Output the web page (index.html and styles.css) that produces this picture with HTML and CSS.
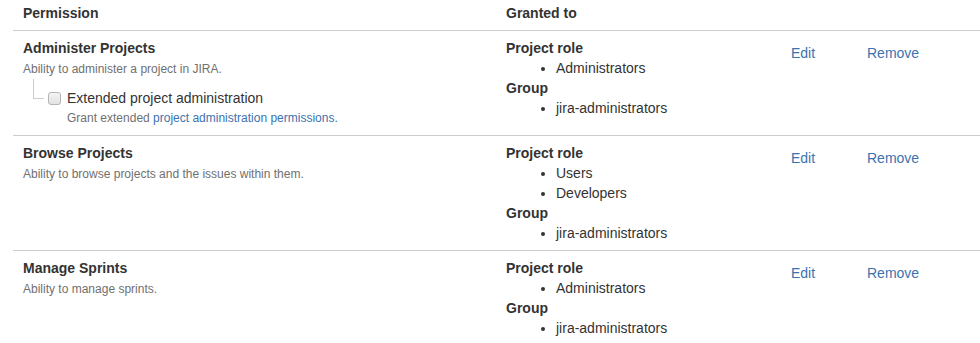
FILE: index.html
```html
<!DOCTYPE html>
<html>
<head>
<meta charset="utf-8">
<link rel="stylesheet" href="styles.css">
</head>
<body>
<div class="page">
<table class="perms">
  <colgroup>
    <col class="c-perm"><col class="c-grant"><col class="c-edit"><col class="c-remove">
  </colgroup>
  <thead>
    <tr>
      <th>Permission</th>
      <th>Granted to</th>
      <th></th>
      <th></th>
    </tr>
  </thead>
  <tbody>
    <tr>
      <td>
        <div class="title">Administer Projects</div>
        <div class="desc">Ability to administer a project in JIRA.</div>
        <div class="ext-row">
          <span class="connector"></span>
          <span class="checkbox"></span>
          <span class="ext-label">Extended project administration</span>
        </div>
        <div class="ext-desc">Grant extended <a href="#">project administration permissions.</a></div>
      </td>
      <td>
        <div class="grp">Project role</div>
        <ul><li>Administrators</li></ul>
        <div class="grp">Group</div>
        <ul><li>jira-administrators</li></ul>
      </td>
      <td class="act"><a href="#">Edit</a></td>
      <td class="act"><a href="#">Remove</a></td>
    </tr>
    <tr>
      <td>
        <div class="title">Browse Projects</div>
        <div class="desc">Ability to browse projects and the issues within them.</div>
      </td>
      <td>
        <div class="grp">Project role</div>
        <ul><li>Users</li><li>Developers</li></ul>
        <div class="grp">Group</div>
        <ul><li>jira-administrators</li></ul>
      </td>
      <td class="act"><a href="#">Edit</a></td>
      <td class="act"><a href="#">Remove</a></td>
    </tr>
    <tr>
      <td>
        <div class="title">Manage Sprints</div>
        <div class="desc">Ability to manage sprints.</div>
      </td>
      <td>
        <div class="grp">Project role</div>
        <ul><li>Administrators</li></ul>
        <div class="grp">Group</div>
        <ul><li>jira-administrators</li></ul>
      </td>
      <td class="act"><a href="#">Edit</a></td>
      <td class="act"><a href="#">Remove</a></td>
    </tr>
  </tbody>
</table>
</div>
</body>
</html>
```
FILE: styles.css
```css
html, body {
  margin: 0;
  padding: 0;
  background: #fff;
}
body {
  font-family: "Liberation Sans", Arial, sans-serif;
  font-size: 14px;
  line-height: 20px;
  color: #333;
}
.page {
  padding-left: 13px;
}
.perms {
  border-collapse: collapse;
  width: 967px;
  table-layout: fixed;
}
.c-perm { width: 483px; }
.c-grant { width: 285px; }
.c-edit { width: 76px; }
.c-remove { width: 123px; }
.perms th {
  text-align: left;
  font-weight: bold;
  padding: 3px 10px 7px;
  border-bottom: 1px solid #ccc;
  vertical-align: top;
}
.perms td {
  padding: 7px 10px 7px;
  vertical-align: top;
  border-bottom: 1px solid #ccc;
}
.perms tbody tr:last-child td {
  border-bottom: none;
}
.title {
  font-weight: bold;
}
.desc {
  font-size: 12px;
  color: #707070;
  margin-top: 1px;
}
.ext-row {
  display: flex;
  align-items: center;
  margin-top: 9px;
  padding-left: 10px;
  height: 20px;
}
.connector {
  align-self: flex-start;
  margin-top: -9px;
  width: 11px;
  height: 20px;
  border-left: 1px solid #ccc;
  border-bottom: 1px solid #ccc;
  box-sizing: border-box;
  flex: none;
}
.checkbox {
  flex: none;
  width: 13px;
  height: 13px;
  margin-left: 4px;
  box-sizing: border-box;
  border: 1px solid #b5b5b5;
  border-radius: 3px;
  background: linear-gradient(#f4f4f4, #e2e2e2);
}
.ext-label {
  margin-left: 6px;
}
.ext-desc {
  font-size: 12px;
  color: #707070;
  padding-left: 44px;
}
a {
  color: #3b73af;
  text-decoration: none;
}
.grp {
  font-weight: bold;
}
.perms ul {
  margin: 0;
  padding-left: 50px;
  list-style: disc;
}
.perms td.act {
  padding-top: 12px;
}
```
